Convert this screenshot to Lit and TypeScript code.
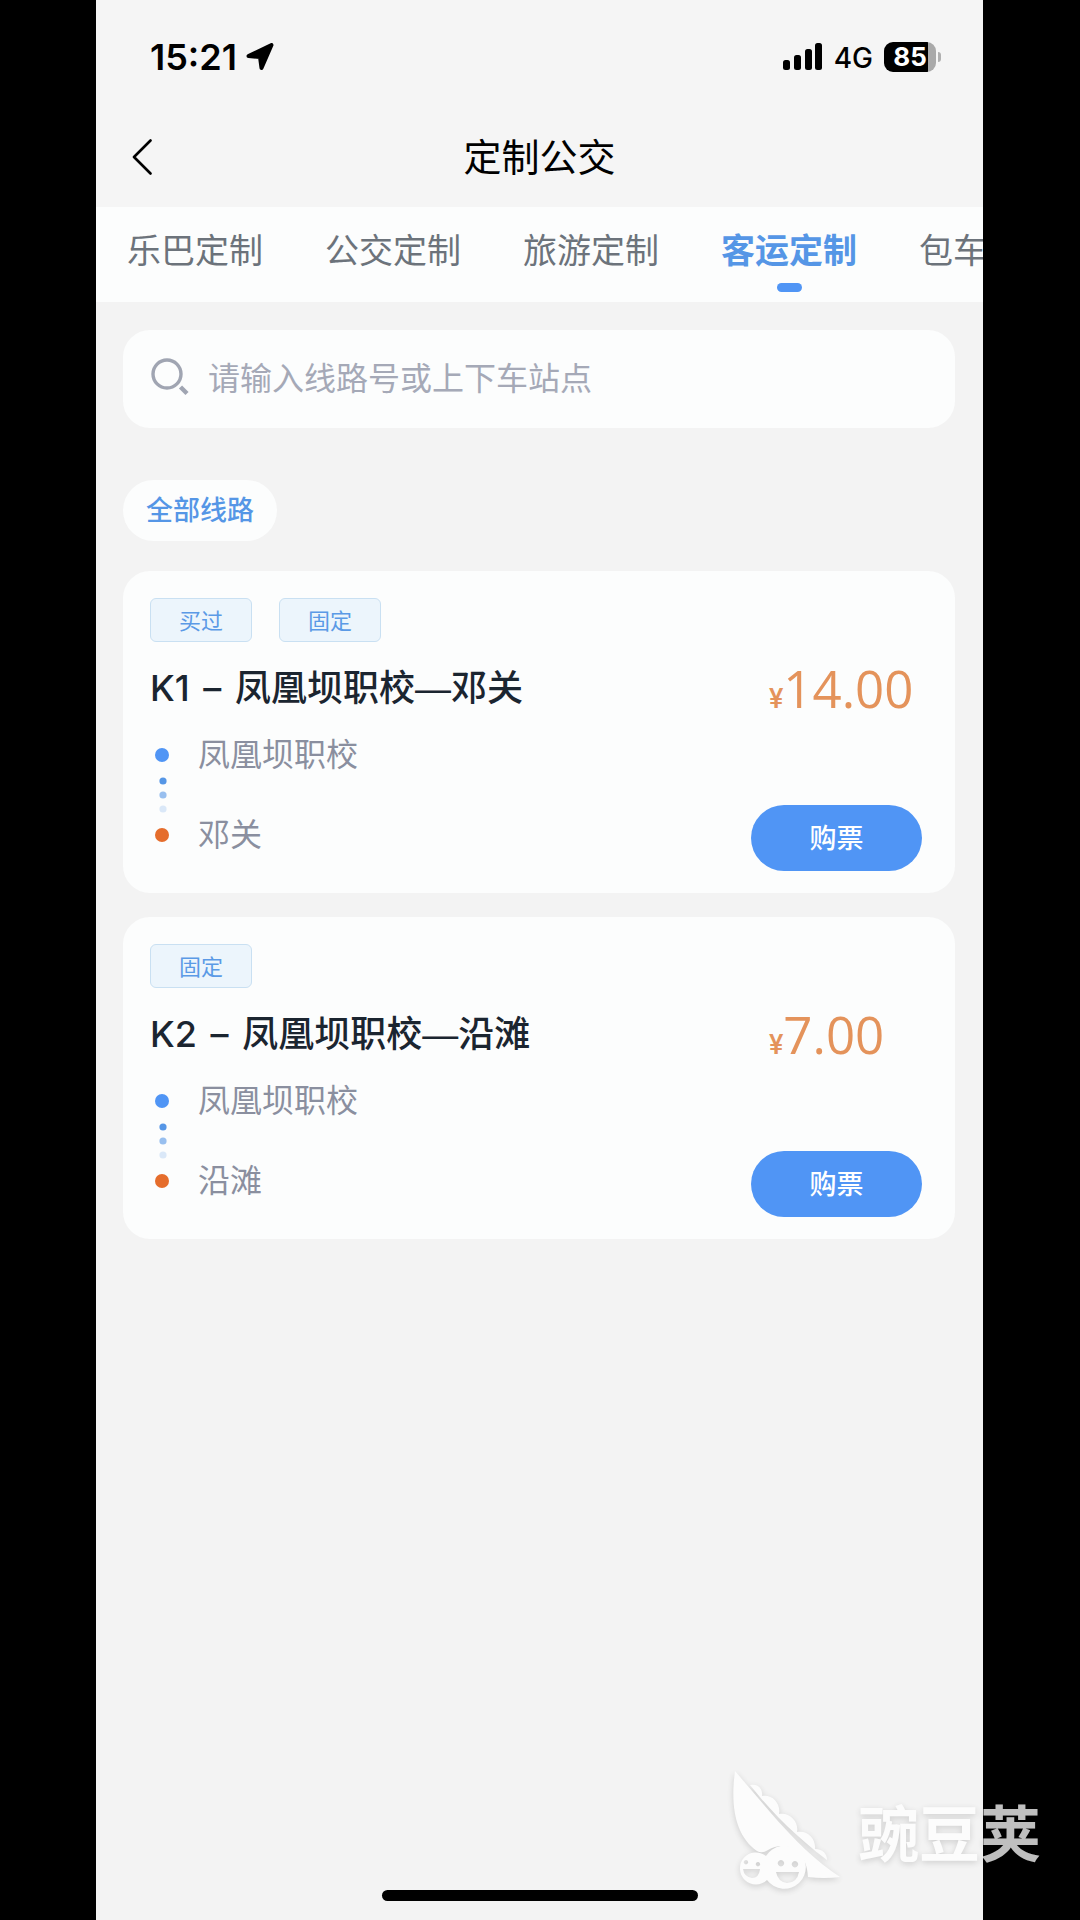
import { LitElement, html, css, svg } from "lit";
import { customElement, property, state } from "lit/decorators.js";
import { classMap } from "lit/directives/class-map.js";

interface Route {
  code: string;
  from: string;
  to: string;
  price: string;
  tags: string[];
}

const TABS = ["乐巴定制", "公交定制", "旅游定制", "客运定制", "包车定制"];

const ROUTES: Route[] = [
  { code: "K1", from: "凤凰坝职校", to: "邓关", price: "14.00", tags: ["买过", "固定"] },
  { code: "K2", from: "凤凰坝职校", to: "沿滩", price: "7.00", tags: ["固定"] },
];

@customElement("status-bar")
export class StatusBar extends LitElement {
  static styles = css`
    :host {
      display: flex;
      align-items: center;
      justify-content: space-between;
      height: 113px;
      padding: 0 42px 0 54px;
      box-sizing: border-box;
      color: #000;
      font-family: Inter, "Noto Sans CJK SC", sans-serif;
    }
    .side {
      display: flex;
      align-items: center;
    }
    .time {
      font-size: 36px;
      font-weight: 600;
      line-height: 40px;
    }
    .arrow {
      margin-left: 9px;
    }
    .network {
      margin: 2px 11px 0 11px;
      font-size: 28px;
      font-weight: 500;
      line-height: 32px;
    }
    .battery {
      display: flex;
      align-items: center;
      gap: 2px;
    }
    .level {
      width: 52px;
      height: 30px;
      border-radius: 9px;
      background: linear-gradient(to right, #000 85%, #a9a9a9 85%);
      color: #fff;
      font-size: 26px;
      font-weight: 700;
      line-height: 30px;
      text-align: center;
    }
    .cap {
      width: 3px;
      height: 10px;
      border-radius: 0 3px 3px 0;
      background: #b0b0b0;
    }
  `;

  render() {
    return html`
      <div class="side">
        <span class="time">15:21</span>
        <svg class="arrow" width="28" height="28" viewBox="0 0 28 28" aria-hidden="true">
          <path d="M25.500 2 15.500 25 14 14 2.500 13Z" fill="#000" stroke="#000" stroke-width="4" stroke-linejoin="round" />
        </svg>
      </div>
      <div class="side">
        <svg width="40" height="27" viewBox="0 0 40 27" aria-hidden="true">
          <rect x="0" y="17" width="7" height="10" rx="2.5" />
          <rect x="11" y="12" width="7" height="15" rx="2.5" />
          <rect x="22" y="6" width="7" height="21" rx="2.5" />
          <rect x="32" y="0" width="7" height="27" rx="2.5" />
        </svg>
        <span class="network">4G</span>
        <div class="battery">
          <div class="level">85</div>
          <div class="cap"></div>
        </div>
      </div>
    `;
  }
}

@customElement("route-card")
export class RouteCard extends LitElement {
  @property({ attribute: false }) route!: Route;

  static styles = css`
    :host {
      display: block;
      padding: 27px 33px 22px 27px;
      border-radius: 27px;
      background: #fcfdfd;
    }
    .tags {
      display: flex;
      gap: 27px;
      margin: 0 0 21px;
      padding: 0;
      list-style: none;
    }
    .tag {
      box-sizing: border-box;
      width: 102px;
      height: 44px;
      border: 1px solid #c9e0f2;
      border-radius: 6px;
      background: #ecf5fc;
      color: #5b9ae6;
      font-size: 22px;
      line-height: 44px;
      text-align: center;
    }
    .body {
      display: grid;
      grid-template-columns: 1fr 171px;
      row-gap: 22px;
    }
    .name {
      height: 50px;
      margin: 0;
      color: #1b2530;
      font-size: 36px;
      font-weight: 500;
      line-height: 50px;
      white-space: nowrap;
    }
    .dash {
      padding: 0 4px;
    }
    .join {
      font-family: "Liberation Sans", sans-serif;
    }
    .price {
      height: 50px;
      padding-left: 18px;
      color: #e4935b;
      font-family: "Open Sans", "Noto Sans CJK SC", sans-serif;
      font-size: 51px;
      line-height: 50px;
      white-space: nowrap;
    }
    .currency {
      font-family: Roboto, sans-serif;
      font-size: 27px;
      font-weight: 500;
    }
    .path {
      display: flex;
      gap: 28px;
      padding-left: 5px;
    }
    .stops {
      display: flex;
      flex-direction: column;
      gap: 40px;
      margin: 0;
      padding: 0;
      list-style: none;
      color: #8a8f9f;
      font-size: 32px;
      line-height: 40px;
    }
    .track {
      margin-top: 13px;
    }
    .buy {
      align-self: end;
      height: 66px;
      margin-top: 70px;
      padding: 0 0 3px;
      border: 0;
      border-radius: 33px;
      background: #5095f5;
      color: #fff;
      font: inherit;
      font-size: 27px;
      font-weight: 500;
    }
  `;

  render() {
    const r = this.route;
    return html`
      <ul class="tags">
        ${r.tags.map((t) => html`<li class="tag">${t}</li>`)}
      </ul>
      <div class="body">
        <h2 class="name">${r.code} <span class="dash">–</span> ${r.from}<span class="join">—</span>${r.to}</h2>
        <div class="price"><span class="currency">¥</span>${r.price}</div>
        <div class="path">
          <svg class="track" width="15" height="94" viewBox="0 0 15 94" aria-hidden="true">
            <circle cx="7" cy="7" r="7" fill="#5095f5" />
            ${[1, 0.6, 0.2].map(
              (o, i) => svg`<circle cx="8" cy=${33 + i * 14} r="3.6" fill="#5596e6" opacity=${o} />`
            )}
            <circle cx="7" cy="87" r="7" fill="#e56d2c" />
          </svg>
          <ol class="stops">
            <li>${r.from}</li>
            <li>${r.to}</li>
          </ol>
        </div>
        <button class="buy" type="button">购票</button>
      </div>
    `;
  }
}

@customElement("app-root")
export class AppRoot extends LitElement {
  @state() private active = 3;

  static styles = css`
    :host {
      display: block;
      position: relative;
      box-sizing: border-box;
      min-height: 100vh;
      padding: 0 97px 0 96px;
      background: #000;
      font-family: Inter, "Noto Sans CJK SC", sans-serif;
    }
    .screen {
      display: flex;
      flex-direction: column;
      min-height: 100vh;
      background: #f3f3f3;
    }
    .top {
      background: #f5f5f5;
    }
    .nav {
      display: grid;
      grid-template-columns: 60px 1fr 60px;
      align-items: center;
      height: 94px;
      padding: 0 18px;
    }
    .back {
      display: flex;
      align-items: center;
      height: 60px;
      margin-top: -6px;
      padding: 0 18px;
      border: 0;
      background: none;
    }
    .title {
      margin: 0 0 6px;
      color: #000;
      font-size: 38px;
      font-weight: 400;
      line-height: 56px;
      text-align: center;
    }
    .tabs {
      display: flex;
      height: 95px;
      overflow: hidden;
      background: #fcfdfd;
    }
    .tab {
      display: flex;
      flex: none;
      flex-direction: column;
      align-items: center;
      gap: 7px;
      padding: 19px 31px 0;
      border: 0;
      background: none;
      color: #6c737b;
      font: inherit;
      font-size: 34px;
      line-height: 50px;
    }
    .tab.active {
      color: #5596e6;
      font-weight: 700;
    }
    .tab.active::after {
      width: 25px;
      height: 9px;
      border-radius: 5px;
      background: #5095f5;
      content: "";
    }
    .content {
      display: flex;
      flex: 1;
      flex-direction: column;
      padding: 28px 28px 28px 27px;
    }
    .search {
      display: flex;
      align-items: center;
      gap: 19px;
      height: 98px;
      padding: 0 27px 0 28px;
      border-radius: 27px;
      background: #fcfdfd;
    }
    .glass {
      margin-bottom: 4px;
    }
    .query {
      flex: 1;
      min-width: 0;
      height: 60px;
      padding: 0 0 2px;
      border: 0;
      outline: 0;
      background: none;
      color: #333;
      font: inherit;
      font-size: 32px;
    }
    .query::placeholder {
      color: #a5a9b7;
      opacity: 1;
    }
    .filter {
      align-self: flex-start;
      height: 61px;
      margin: 52px 0 30px;
      padding: 0 23px 4px;
      border: 0;
      border-radius: 31px;
      background: #fcfdfd;
      color: #5596e6;
      font: inherit;
      font-size: 27px;
      font-weight: 500;
    }
    .routes {
      display: flex;
      flex-direction: column;
      gap: 24px;
    }
    .home {
      align-self: center;
      width: 316px;
      height: 11px;
      margin-bottom: 19px;
      border-radius: 6px;
      background: #000;
    }
    .watermark {
      position: absolute;
      right: 39px;
      bottom: 28px;
      display: flex;
      align-items: center;
      gap: 16px;
      color: #fff;
      opacity: 0.75;
      filter: drop-shadow(0 2px 3px rgba(0, 0, 0, 0.2));
      pointer-events: none;
    }
    .brand {
      font-family: "Noto Sans CJK SC", sans-serif;
      font-size: 61px;
      font-weight: 700;
      line-height: 60px;
    }
  `;

  render() {
    return html`
      <main class="screen">
        <header class="top">
          <status-bar></status-bar>
          <div class="nav">
            <button class="back" type="button" aria-label="返回">
              <svg width="20" height="36" viewBox="0 0 20 36" aria-hidden="true">
                <path d="M18.500 1.500 2 18 18.500 34.500" fill="none" stroke="#000" stroke-width="2.600" stroke-linecap="round" stroke-linejoin="round" />
              </svg>
            </button>
            <h1 class="title">定制公交</h1>
          </div>
        </header>
        <nav class="tabs">
          ${TABS.map(
            (t, i) => html`<button
              type="button"
              class=${classMap({ tab: true, active: i === this.active })}
              @click=${() => (this.active = i)}
            >${t}</button>`
          )}
        </nav>
        <div class="content">
          <div class="search">
            <svg class="glass" width="38" height="38" viewBox="0 0 38 38" aria-hidden="true">
              <g fill="none" stroke="#a0a5b2" stroke-width="3.400">
                <circle cx="16" cy="16" r="14" />
                <path d="M29.500 29 36 35.500" stroke-width="4.400" />
              </g>
            </svg>
            <input class="query" type="text" aria-label="搜索线路" placeholder="请输入线路号或上下车站点" />
          </div>
          <button class="filter" type="button">全部线路</button>
          <div class="routes">
            ${ROUTES.map((r) => html`<route-card .route=${r}></route-card>`)}
          </div>
        </div>
        <div class="home"></div>
      </main>
      <div class="watermark">
        <svg width="110" height="122" viewBox="0 0 110 122" aria-hidden="true">
          <g fill="currentColor">
            <path d="M3 1C-2 38 4 66 25 81Q30 84 36 80C52 70 75 78 76 107Q92 109 108 107C85 92 62 70 38 42Z" />
            <path d="M18 15C27 13 31 20 30 26C40 24 49 33 47 44C58 42 67 52 65 62C76 60 84 69 83 79C91 79 95 84 95 90C65 67 42 45 18 15Z" />
            <path fill-rule="evenodd" d="M34 86A16 16 0 1 0 35 110A21.500 21.500 0 1 0 34 86ZM14 90A2.200 2.200 0 1 1 13.900 90ZM26 92A2.200 2.200 0 1 1 25.900 92ZM11 99H28Q27 108 20 108Q12 107 11 99ZM49 90A3.200 3.200 0 1 1 48.900 90ZM63 91A3.200 3.200 0 1 1 62.900 91ZM44 102H67Q65 113 55 113Q46 112 44 102Z" />
          </g>
        </svg>
        <span class="brand">豌豆荚</span>
      </div>
    `;
  }
}
